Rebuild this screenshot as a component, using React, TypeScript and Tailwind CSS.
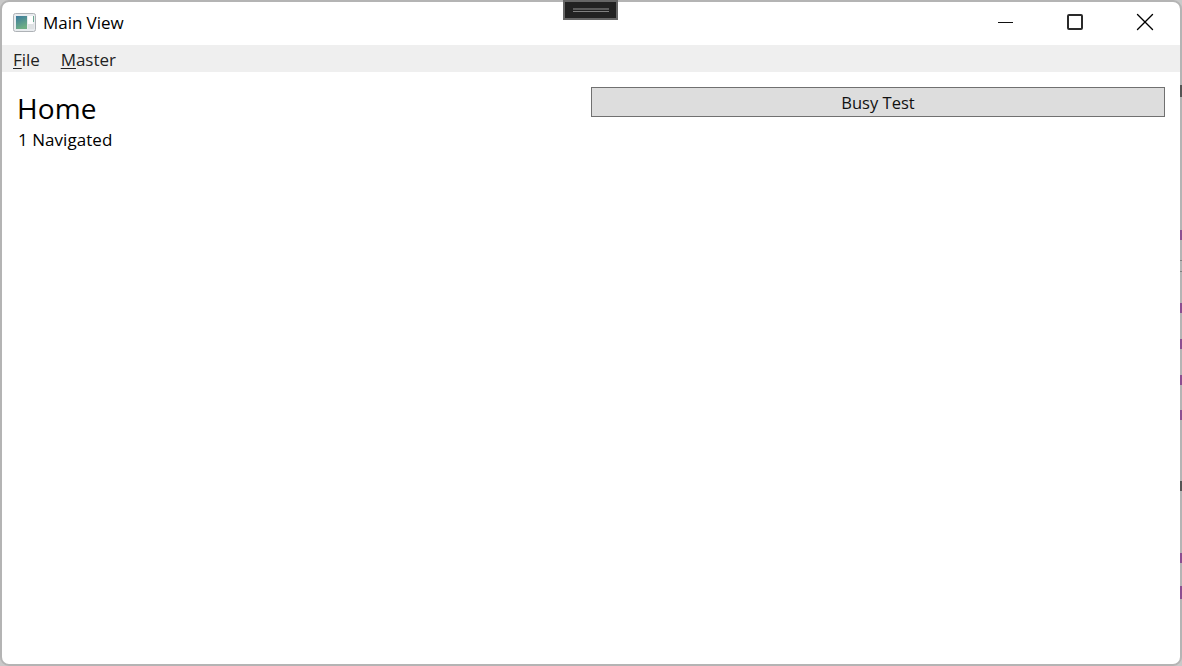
import { X } from "lucide-react";

const edgeMarks = [
  { top: "top-[85px]", size: "h-[12px]", tone: "bg-[#555555]" },
  { top: "top-[230px]", size: "h-[10px]", tone: "bg-[#8b4f91]" },
  { top: "top-[260px]", size: "h-px", tone: "bg-[#808080]" },
  { top: "top-[271px]", size: "h-px", tone: "bg-[#808080]" },
  { top: "top-[303px]", size: "h-[10px]", tone: "bg-[#8b4f91]" },
  { top: "top-[339px]", size: "h-[10px]", tone: "bg-[#8b4f91]" },
  { top: "top-[375px]", size: "h-[10px]", tone: "bg-[#8b4f91]" },
  { top: "top-[410px]", size: "h-[10px]", tone: "bg-[#8b4f91]" },
  { top: "top-[481px]", size: "h-[10px]", tone: "bg-[#555555]" },
  { top: "top-[553px]", size: "h-[10px]", tone: "bg-[#8b4f91]" },
  { top: "top-[586px]", size: "h-[13px]", tone: "bg-[#8b4f91]" },
];

function AppIcon() {
  return (
    <svg width="23" height="19" viewBox="0 0 23 19" className="mb-[3px] shrink-0">
      <defs>
        <linearGradient id="pane" x1="0" y1="0" x2="0.4" y2="1">
          <stop offset="0" stopColor="#3a7a9e" />
          <stop offset="1" stopColor="#6fae84" />
        </linearGradient>
      </defs>
      <rect x="0.5" y="0.5" width="22" height="18" rx="2" fill="#e9ecef" stroke="#aeb2b6" />
      <rect x="3" y="3" width="11" height="13" fill="url(#pane)" />
      <rect x="15" y="3" width="5" height="8" fill="#ffffff" />
      <rect x="20" y="3" width="1" height="6" fill="#6aa890" />
      <rect x="15" y="11" width="6" height="5" fill="#dfe2e4" />
    </svg>
  );
}

function App() {
  return (
    <div className="relative w-[1182px] h-[666px] overflow-hidden bg-[#c9c9c9] font-['Open_Sans','Noto_Sans',sans-serif] text-black">
      <div className="flex h-full flex-col overflow-hidden rounded-[9px] border-2 border-[#b4b4b4] bg-white">
        <header className="flex h-[43px] shrink-0 items-center pl-[11px]">
          <AppIcon />
          <span className="mb-[2px] ml-[7px] text-[17px] leading-none tracking-[-0.05px]">Main View</span>
          <div className="mb-[3px] ml-auto flex items-center">
            <span className="flex w-[70px] justify-center">
              <span className="h-px w-[15px] bg-[#111111]" />
            </span>
            <span className="flex w-[70px] justify-center">
              <span className="h-[16px] w-[16px] rounded-[2px] border-2 border-[#2a2a2a]" />
            </span>
            <span className="flex w-[70px] justify-center">
              <X size={30} strokeWidth={1.4} absoluteStrokeWidth />
            </span>
          </div>
        </header>

        <nav className="flex h-[27px] shrink-0 items-center gap-[21px] bg-[#efefef] pl-[11px] pt-[1px] text-[17px] leading-none tracking-[-0.05px] text-[#222222]">
          <span><span className="underline underline-offset-2">F</span>ile</span>
          <span><span className="underline underline-offset-2">M</span>aster</span>
        </nav>

        <main className="flex flex-1 justify-between pl-[15px] pr-[15px] pt-[15px]">
          <div>
            <h1 className="mt-[4px] text-[28px] leading-[34px] tracking-[0.1px]">Home</h1>
            <p className="mt-[3px] pl-[1px] text-[17px] leading-[23px] tracking-[0.05px]">1 Navigated</p>
          </div>
          <button className="flex h-[30px] w-[574px] items-center justify-center border border-[#707070] bg-[#dddddd] pt-[2px] text-[16.5px] leading-none text-[#111111]">
            Busy Test
          </button>
        </main>
      </div>

      {/* tool strip sitting over the window's top edge */}
      <div className="absolute left-[563px] top-0 flex h-[20px] w-[55px] flex-col items-center justify-center gap-[1px] border-2 border-[#666666] bg-[#222222]">
        <span className="h-[2px] w-[36px] bg-[#5a5a5a]" />
        <span className="h-px w-[36px] bg-[#808080]" />
      </div>

      {/* bits of whatever is behind the window, showing along the right edge */}
      {edgeMarks.map((m) => (
        <span key={m.top} className={`absolute right-0 w-[2px] ${m.top} ${m.size} ${m.tone}`} />
      ))}
    </div>
  );
}

export default App;
